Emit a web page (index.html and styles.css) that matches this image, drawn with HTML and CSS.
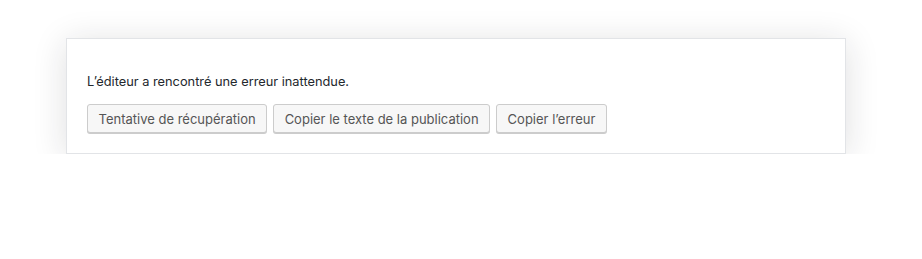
FILE: index.html
```html
<!DOCTYPE html>
<html lang="fr">
<head>
  <meta charset="UTF-8">
  <title>Erreur de l’éditeur</title>
  <link rel="stylesheet" href="styles.css">
</head>
<body>
  <div class="warning">
    <p class="warning-message">L’éditeur a rencontré une erreur inattendue.</p>
    <div class="warning-actions">
      <button class="button">Tentative de récupération</button>
      <button class="button">Copier le texte de la publication</button>
      <button class="button">Copier l’erreur</button>
    </div>
  </div>
</body>
</html>
```

FILE: styles.css
```css
body {
  margin: 0;
  background: #fff;
  font-family: Inter, "Liberation Sans", Arial, sans-serif;
  font-size: 13px;
  color: #23282d;
}
.warning {
  box-sizing: border-box;
  width: 780px;
  margin: 38px 0 0 66px;
  padding: 20px;
  background: #fff;
  border: 1px solid #e2e4e7;
  box-shadow: 0 4px 32px rgba(25, 30, 35, 0.14);
}
.warning-message {
  margin: 13px 0 0;
  line-height: 20px;
  font-size: 12.8px;
}
.warning-actions {
  display: flex;
  gap: 6px;
  margin-top: 12px;
}
.button {
  height: 29px;
  padding: 0 10.5px;
  background: #f7f7f7;
  border: 1px solid #ccc;
  border-radius: 3px;
  box-shadow: 0 1px 0 #ccc;
  font-family: inherit;
  font-size: 13px;
  color: #555;
  cursor: pointer;
}
```
